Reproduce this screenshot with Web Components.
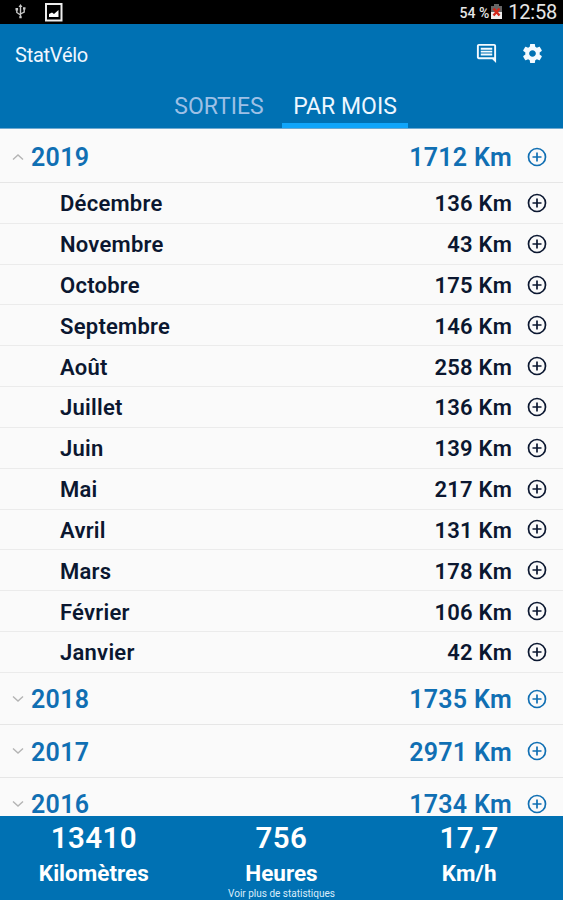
<!DOCTYPE html>
<html lang="fr">
<head>
<meta charset="utf-8">
<title>StatVélo</title>
<style>
  html, body {
    margin: 0;
    height: 100%;
  }

  body {
    font-family: Roboto, "Liberation Sans", sans-serif;
    overflow: hidden;
    --blue: #0071b3;
    --link: #106fb3;
  }
</style>
</head>
<body>
<stat-app></stat-app>

<script>
function attach(el, html) {
  const template = document.createElement('template');
  template.innerHTML = html;
  el.attachShadow({ mode: 'open' });
  el.shadowRoot.appendChild(template.content.cloneNode(true));
}

class StatusBar extends HTMLElement {
  constructor() {
    super();
    attach(this, `
<style>
  :host {
    display: flex;
    align-items: center;
    height: 24px;
    box-sizing: border-box;
    padding: 0 6px 0 14px;
    background: #000;
    color: #e6e6e6;
  }
  svg { display: block; flex: none; }
  .usb { margin-right: 18px; }
  .percent { margin-left: auto; margin-right: 1px; font-size: 14px; font-weight: 500; padding-top: 2px; white-space: nowrap; }
  .battery { margin-right: 5px; }
  .clock { font-size: 20px; line-height: 24px; letter-spacing: -0.2px; }
</style>
<svg class="usb" width="13" height="16" viewBox="0 0 13 16" fill="none" stroke="#c8c8c8" stroke-width="1.4">
  <path d="M6.5 2v11M2.8 5.5v3L6.5 11M10.2 4.5v3.5L6.5 10"/>
  <path d="M6.5 0l2 3h-4zM1.5 4h2.6v2.4H1.5zM9 3.2h2.5v2.4H9zM5.3 12.3h2.4v2H5.3z" fill="#c8c8c8" stroke="none"/>
</svg>
<svg width="18" height="19" viewBox="0 0 18 19">
  <rect x="1" y="1" width="15.5" height="16.5" fill="none" stroke="#eee" stroke-width="2"/>
  <path d="M4 14v-3l3-1.5 2 1.5 4.5-4V14z" fill="#fff"/>
</svg>
<span class="percent">54 %</span>
<svg class="battery" width="13" height="16" viewBox="0 0 13 16">
  <path d="M4 0h5v2h3v6H1V2h3z" fill="#666"/>
  <path d="M1 8h11v7H1z" fill="#eee"/>
  <path d="M3.5 4.5l6 7M9.5 4.5l-6 7" stroke="#d3281b" stroke-width="2.4"/>
</svg>
<span class="clock">12:58</span>
`);
  }
}

class AppHeader extends HTMLElement {
  constructor() {
    super();
    attach(this, `
<style>
  :host {
    display: flex;
    align-items: center;
    height: 60px;
    box-sizing: border-box;
    padding: 0 19px 2px 15px;
    background: var(--blue);
    color: #f0f7ff;
  }
  h1 { margin: 0; flex: 1; font-size: 20px; font-weight: 400; letter-spacing: -0.25px; padding-top: 3px; }
  svg { fill: #f4faff; display: block; }
  .chat { margin-right: 23px; }
</style>
<h1>StatVélo</h1>
<svg class="chat" width="23" height="23" viewBox="0 0 24 24"><path d="M22 4c0-1.100-.9-2-2-2H4c-1.100 0-1.990.9-1.990 2L2 16c0 1.100.9 2 2 2h14l4 4V4zM20 16H4V4h16v12zM6 12h12v2H6zM6 9h12v2H6zM6 6h12v2H6z"/></svg>
<svg width="23" height="23" viewBox="0 0 24 24"><path d="M19.430 12.980c.04-.32.07-.64.07-.98s-.03-.66-.07-.98l2.110-1.650c.19-.15.24-.42.12-.64l-2-3.460c-.12-.22-.39-.3-.61-.22l-2.490 1c-.52-.4-1.080-.73-1.690-.98l-.38-2.650C14.460 2.180 14.250 2 14 2h-4c-.25 0-.46.18-.49.42l-.38 2.650c-.61.25-1.170.59-1.690.98l-2.490-1c-.23-.09-.49 0-.61.22l-2 3.460c-.13.22-.07.49.12.64l2.110 1.650c-.04.32-.07.65-.07.98s.03.66.07.98l-2.110 1.650c-.19.15-.24.42-.12.64l2 3.460c.12.22.39.3.61.22l2.490-1c.52.4 1.080.73 1.690.98l.38 2.650c.03.24.24.42.49.42h4c.25 0 .46-.18.49-.42l.38-2.650c.61-.25 1.170-.59 1.690-.98l2.490 1c.23.09.49 0 .61-.22l2-3.460c.12-.22.07-.49-.12-.64l-2.110-1.650zM12 15.500c-1.930 0-3.500-1.570-3.500-3.500s1.570-3.500 3.500-3.500 3.500 1.570 3.500 3.500-1.570 3.500-3.500 3.500z"/></svg>
`);
  }
}

class TabBar extends HTMLElement {
  constructor() {
    super();
    attach(this, `
<style>
  :host {
    display: flex;
    justify-content: center;
    height: 45px;
    padding-left: 1px;
    background: var(--blue);
    border-bottom: 1px solid #6fa9d0;
    box-sizing: border-box;
    font-size: 23px;
  }
  div {
    box-sizing: border-box;
    width: 126px;
    text-align: center;
    line-height: 46px;
    height: 44px;
    color: #9dc0e6;
    white-space: nowrap;
  }
  .on { color: #eef7ff; border-bottom: 5px solid #0fa5fa; }
</style>
<div>SORTIES</div>
<div class="on">PAR MOIS</div>
`);
  }
}

class PlusIcon extends HTMLElement {
  constructor() {
    super();
    attach(this, `
<style>
  :host { display: block; width: 20px; height: 20px; }
  svg { display: block; }
</style>
<svg width="20" height="20" viewBox="0 0 20 20" fill="none" stroke="currentColor" stroke-width="1.700">
  <circle cx="10" cy="10" r="8.500"/>
  <path d="M10 5.500v9M5.500 10h9"/>
</svg>
`);
  }
}

// One month line: label, distance, detail button
class MonthRow extends HTMLElement {
  constructor() {
    super();
    attach(this, `
<style>
  :host {
    display: flex;
    align-items: center;
    box-sizing: border-box;
    height: 40.820px;
    padding: 0 16px 0 60px;
    border-bottom: 1px solid #ebebeb;
    color: #0b1730;
    font-size: 22px;
    font-weight: 600;
    letter-spacing: 0.25px;
  }
  .name { flex: 1; padding-top: 2px; }
  .km { margin-right: 15px; padding-top: 2px; }
</style>
<span class="name"><slot></slot></span>
<span class="km"><slot name="km"></slot></span>
<plus-icon></plus-icon>
`);
  }
}

class YearRow extends HTMLElement {
  constructor() {
    super();
    attach(this, `
<style>
  :host {
    display: flex;
    align-items: center;
    box-sizing: border-box;
    height: 52.700px;
    padding: 0 16px 0 12px;
    border-bottom: 1px solid #e6e6e6;
    color: var(--link);
    font-size: 25px;
    font-weight: 600;
    letter-spacing: 0.3px;
  }
  :host([open]) { height: 54px; padding-top: 2px; }
  svg { display: block; width: 12px; height: 8px; margin-right: 7px; }
  :host([open]) svg { transform: scaleY(-1); }
  .name { flex: 1; padding-top: 2px; }
  .km { margin-right: 15px; padding-top: 2px; }
</style>
<svg viewBox="0 0 12 8" fill="none" stroke="#b4b4b4" stroke-width="1.400"><path d="M1 1.500l5 4.500 5-4.500"/></svg>
<span class="name"><slot></slot></span>
<span class="km"><slot name="km"></slot></span>
<plus-icon></plus-icon>
`);
  }
}

class StatTotal extends HTMLElement {
  constructor() {
    super();
    attach(this, `
<style>
  :host { display: block; text-align: center; font-weight: 600; }
  .value { font-size: 29.500px; line-height: 34px; letter-spacing: 0.4px; }
  .unit { font-size: 22.500px; line-height: 26px; margin-top: 5px; font-weight: 700; }
</style>
<div class="value"><slot></slot></div>
<div class="unit"><slot name="unit"></slot></div>
`);
  }
}

class TotalsBar extends HTMLElement {
  constructor() {
    super();
    attach(this, `
<style>
  :host {
    display: block;
    box-sizing: border-box;
    height: 84px;
    padding-top: 5px;
    background: var(--blue);
    color: #fff;
    overflow: hidden;
  }
  .totals { display: grid; grid-template-columns: repeat(3, 1fr); }
  .more { text-align: center; font-size: 10px; line-height: 12px; padding-top: 2px; color: #d9ecfb; }
</style>
<div class="totals">
  <stat-total>13410<span slot="unit">Kilomètres</span></stat-total>
  <stat-total>756<span slot="unit">Heures</span></stat-total>
  <stat-total>17,7<span slot="unit">Km/h</span></stat-total>
</div>
<div class="more">Voir plus de statistiques</div>
`);
  }
}

class StatApp extends HTMLElement {
  constructor() {
    super();
    attach(this, `
<style>
  :host {
    display: flex;
    flex-direction: column;
    height: 900px;
    background: #fafafa;
  }
  status-bar, app-header, tab-bar, totals-bar { flex: none; }
  main { flex: 1; min-height: 0; overflow: hidden; }
</style>
<status-bar></status-bar>
<app-header></app-header>
<tab-bar></tab-bar>
<main>
  <year-row open>2019<span slot="km">1712 Km</span></year-row>
  <month-row>Décembre<span slot="km">136 Km</span></month-row>
  <month-row>Novembre<span slot="km">43 Km</span></month-row>
  <month-row>Octobre<span slot="km">175 Km</span></month-row>
  <month-row>Septembre<span slot="km">146 Km</span></month-row>
  <month-row>Août<span slot="km">258 Km</span></month-row>
  <month-row>Juillet<span slot="km">136 Km</span></month-row>
  <month-row>Juin<span slot="km">139 Km</span></month-row>
  <month-row>Mai<span slot="km">217 Km</span></month-row>
  <month-row>Avril<span slot="km">131 Km</span></month-row>
  <month-row>Mars<span slot="km">178 Km</span></month-row>
  <month-row>Février<span slot="km">106 Km</span></month-row>
  <month-row>Janvier<span slot="km">42 Km</span></month-row>
  <year-row>2018<span slot="km">1735 Km</span></year-row>
  <year-row>2017<span slot="km">2971 Km</span></year-row>
  <year-row>2016<span slot="km">1734 Km</span></year-row>
</main>
<totals-bar></totals-bar>
`);
  }
}

customElements.define('plus-icon', PlusIcon);
customElements.define('status-bar', StatusBar);
customElements.define('app-header', AppHeader);
customElements.define('tab-bar', TabBar);
customElements.define('month-row', MonthRow);
customElements.define('year-row', YearRow);
customElements.define('stat-total', StatTotal);
customElements.define('totals-bar', TotalsBar);
customElements.define('stat-app', StatApp);
</script>
</body>
</html>
